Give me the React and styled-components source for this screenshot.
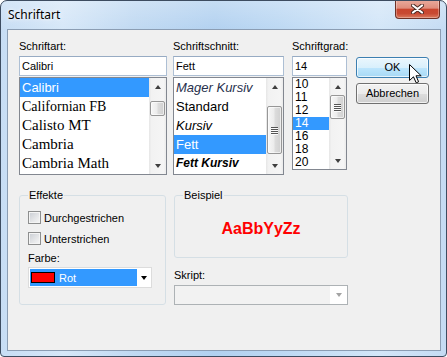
import React from 'react';
import styled, { createGlobalStyle } from 'styled-components';

const GlobalStyle = createGlobalStyle`
  html, body {
    margin: 0;
    padding: 0;
    background: #ffffff;
    overflow: hidden;
  }
  body {
    font-family: "Liberation Sans", Arial, sans-serif;
    font-size: 11px;
    color: #000;
  }
`;

const SANS = '"Liberation Sans", Arial, sans-serif';
const SERIF = '"Liberation Serif", "Times New Roman", serif';

const Window = styled.div`
  width: 447px;
  height: 357px;
  box-sizing: border-box;
  border: 1px solid #3d4c60;
  border-radius: 7px 7px 4px 4px;
  background:
    linear-gradient(to bottom, rgba(255,255,255,0.25), rgba(255,255,255,0) 30px),
    linear-gradient(to right, #c7ddf4 0%, #d6e7f8 14%, #c0d9f2 30%, #b2d1f0 48%, #bcd8f3 62%, #d3e6f8 85%, #c4dbf3 100%);
  display: flex;
  flex-direction: column;
  overflow: hidden;
`;

const TitleBar = styled.div`
  height: 28px;
  flex: none;
  display: flex;
  align-items: flex-start;
  justify-content: space-between;
`;

const Title = styled.div`
  font-family: "Noto Sans", "Open Sans", sans-serif;
  font-size: 12px;
  line-height: 16px;
  margin: 6px 0 0 7px;
  color: #000;
  text-shadow: 0 0 6px #fff, 0 0 3px #fff;
`;

const CloseButton = styled.div`
  width: 45px;
  height: 19px;
  margin: -1px 6px 0 0;
  box-sizing: border-box;
  border: 1px solid #6e3126;
  border-top: none;
  border-radius: 0 0 4px 4px;
  background: linear-gradient(to bottom, #e9ab9d 0%, #df8d7c 45%, #c9452e 52%, #c84a33 75%, #db7a5e 100%);
  box-shadow: inset 0 0 0 1px rgba(255, 255, 255, 0.3);
  display: flex;
  align-items: center;
  justify-content: center;
`;

const Client = styled.div`
  flex: 1;
  margin: 0 5px 5px 6px;
  border: 1px solid #8b9db3;
  background: #f0f0f0;
  padding: 10px 0 0 11px;
`;

const Row = styled.div`
  display: flex;
  align-items: flex-start;
  margin-top: ${p => p.$top || 0}px;
`;

const Column = styled.div`
  width: ${p => p.$w}px;
  margin-right: ${p => p.$gap || 0}px;
  flex: none;
  display: flex;
  flex-direction: column;
`;

const Label = styled.div`
  line-height: 13px;
  height: 13px;
  margin-top: ${p => p.$top || 0}px;
  margin-bottom: ${p => p.$bottom || 0}px;
  white-space: nowrap;
`;

const TextBox = styled.div`
  height: 20px;
  box-sizing: border-box;
  border: 1px solid #adbfd4;
  border-top-color: #97abc3;
  background: #fff;
  padding-left: 2px;
  line-height: 18px;
`;

const ListBox = styled.div`
  margin-top: 1px;
  height: ${p => p.$h}px;
  box-sizing: border-box;
  border: 1px solid #828790;
  background: #fff;
  display: flex;
`;

const Items = styled.div`
  flex: 1;
  overflow: hidden;
`;

const Item = styled.div`
  height: ${p => p.$h}px;
  line-height: ${p => p.$h}px;
  padding-left: 2px;
  white-space: nowrap;
  font-family: ${p => p.$family || SANS};
  font-size: ${p => p.$size}px;
  font-style: ${p => (p.$italic ? 'italic' : 'normal')};
  font-weight: ${p => (p.$bold ? 'bold' : 'normal')};
  color: ${p => (p.$selected ? '#fff' : p.$color || '#000')};
  background: ${p => (p.$selected ? '#3399ff' : 'transparent')};
`;

const ScrollBar = styled.div`
  width: 17px;
  flex: none;
  display: flex;
  flex-direction: column;
  background: linear-gradient(to right, #e6e6e6 0%, #f2f2f2 15%, #f5f5f5 85%, #ebebeb 100%);
`;

const ArrowBox = styled.div`
  height: 17px;
  flex: none;
  display: flex;
  align-items: center;
  justify-content: center;
`;

const Triangle = styled.div`
  width: 0;
  height: 0;
  border-left: 3.5px solid transparent;
  border-right: 3.5px solid transparent;
  ${p => (p.$up ? 'border-bottom' : 'border-top')}: 4px solid ${p => p.$color || '#3f3f3f'};
`;

const Track = styled.div`
  flex: 1;
  display: flex;
  flex-direction: column;
`;

const Thumb = styled.div`
  margin-top: ${p => p.$top}px;
  margin-left: 1px;
  width: 15px;
  height: ${p => p.$h}px;
  box-sizing: border-box;
  border: 1px solid #979797;
  border-radius: 2px;
  background: linear-gradient(to right, #f7f7f7 0%, #ececec 45%, #dcdcdc 55%, #d0d0d0 100%);
  box-shadow: inset 0 0 0 1px rgba(255, 255, 255, 0.6);
  display: flex;
  flex-direction: column;
  align-items: center;
  justify-content: center;
  gap: 1px;
`;

const GripLine = styled.div`
  width: 7px;
  height: 1px;
  background: #545454;
  box-shadow: 0 1px 0 #fafafa;
`;

const ButtonColumn = styled.div`
  width: 73px;
  flex: none;
  display: flex;
  flex-direction: column;
  padding-top: 17px;
  gap: 5px;
`;

const Button = styled.div`
  position: relative;
  height: 21px;
  box-sizing: border-box;
  border: 1px solid ${p => (p.$hot ? '#3c7fb1' : '#707070')};
  border-radius: 3px;
  background: ${p =>
    p.$hot
      ? 'linear-gradient(to bottom, #eaf6fd 0%, #d9f0fc 50%, #bee6fd 51%, #a7d9f5 100%)'
      : 'linear-gradient(to bottom, #f2f2f2 0%, #ebebeb 50%, #dddddd 51%, #cfcfcf 100%)'};
  box-shadow: inset 0 0 0 1px rgba(255, 255, 255, 0.7);
  display: flex;
  align-items: center;
  justify-content: center;
  line-height: 13px;
`;

const Cursor = styled.svg`
  position: absolute;
  left: 52px;
  top: 6px;
`;

const Group = styled.fieldset`
  margin: 0;
  padding: 0 8px;
  width: ${p => p.$w}px;
  height: ${p => p.$h}px;
  box-sizing: border-box;
  min-width: 0;
  border: 1px solid #d5dfe5;
  border-radius: 3px;
`;

const Legend = styled.legend`
  padding: 0 1px;
  line-height: 13px;
  font-size: 11px;
`;

const CheckRow = styled.div`
  display: flex;
  align-items: center;
  height: 13px;
  margin-top: ${p => p.$top}px;
`;

const CheckBox = styled.div`
  width: 13px;
  height: 13px;
  box-sizing: border-box;
  border: 1px solid #8e8f8f;
  background: linear-gradient(135deg, #c9cdd3 0%, #e6e7e9 60%, #f7f7f7 100%);
  box-shadow: inset 0 0 0 1px #f4f4f4;
  margin-right: 3px;
`;

const ColorCombo = styled.div`
  margin-top: 2px;
  width: 124px;
  height: 21px;
  box-sizing: border-box;
  border: 1px solid #dcdcdc;
  background: #fff;
  display: flex;
  padding: 1px;
`;

const ComboSelection = styled.div`
  flex: 1;
  background: #3399ff;
  color: #fff;
  display: flex;
  align-items: center;
  padding-left: 1px;
`;

const Swatch = styled.div`
  width: 24px;
  height: 11px;
  box-sizing: border-box;
  border: 1px solid #000;
  background: ${p => p.$color};
  margin-right: 4px;
`;

const ComboArrow = styled.div`
  width: 13px;
  display: flex;
  align-items: center;
  justify-content: center;
  padding-top: 1px;
`;

const RightColumn = styled.div`
  width: 174px;
  margin-left: 8px;
  display: flex;
  flex-direction: column;
`;

const Sample = styled.div`
  height: 54px;
  display: flex;
  align-items: center;
  justify-content: center;
  font-family: ${SANS};
  font-weight: bold;
  font-size: 16px;
  color: #ff0000;
`;

const DisabledCombo = styled.div`
  margin-top: 3px;
  height: 20px;
  box-sizing: border-box;
  border: 1px solid #adb2b5;
  background: #f2f2f2;
  display: flex;
  justify-content: flex-end;
`;

const DisabledArrow = styled.div`
  width: 17px;
  background: #fff;
  display: flex;
  align-items: center;
  justify-content: center;
`;

const fonts = [
  { text: 'Calibri', family: SANS, size: 13 },
  { text: 'Californian FB', family: SERIF, size: 14 },
  { text: 'Calisto MT', family: SERIF, size: 15 },
  { text: 'Cambria', family: SERIF, size: 15 },
  { text: 'Cambria Math', family: SERIF, size: 15 },
];

const styles = [
  { text: 'Mager Kursiv', italic: true, color: '#27314d', size: 13 },
  { text: 'Standard', size: 13 },
  { text: 'Kursiv', italic: true, size: 13 },
  { text: 'Fett', size: 13 },
  { text: 'Fett Kursiv', bold: true, italic: true, size: 12 },
];

const sizes = ['10', '11', '12', '14', '16', '18', '20'];

function Scroller({ thumbTop, thumbHeight, grip }) {
  return (
    <ScrollBar>
      <ArrowBox><Triangle $up /></ArrowBox>
      <Track>
        <Thumb $top={thumbTop} $h={thumbHeight}>
          {grip && [0, 1, 2, 3].map(i => <GripLine key={i} />)}
        </Thumb>
      </Track>
      <ArrowBox><Triangle /></ArrowBox>
    </ScrollBar>
  );
}

export default function App() {
  return (
    <>
      <GlobalStyle />
      <Window>
        <TitleBar>
          <Title>Schriftart</Title>
          <CloseButton>
            <svg width="13" height="10" viewBox="0 0 13 10">
              <path d="M2 1.5 L11 8.5 M11 1.5 L2 8.5" stroke="#4b2a24" strokeWidth="4" strokeLinecap="round" />
              <path d="M2 1.5 L11 8.5 M11 1.5 L2 8.5" stroke="#ffffff" strokeWidth="2.2" strokeLinecap="round" />
            </svg>
          </CloseButton>
        </TitleBar>
        <Client>
          <Row>
            <Column $w={148} $gap={6}>
              <Label $bottom={3}>Schriftart:</Label>
              <TextBox>Calibri</TextBox>
              <ListBox $h={98}>
                <Items>
                  {fonts.map((f, i) => (
                    <Item key={f.text} $h={19} $family={f.family} $size={f.size} $selected={i === 0}>
                      {f.text}
                    </Item>
                  ))}
                </Items>
                <Scroller thumbTop={6} thumbHeight={15} />
              </ListBox>
            </Column>
            <Column $w={111} $gap={8}>
              <Label $bottom={3}>Schriftschnitt:</Label>
              <TextBox>Fett</TextBox>
              <ListBox $h={98}>
                <Items>
                  {styles.map((s, i) => (
                    <Item
                      key={s.text}
                      $h={19}
                      $size={s.size}
                      $italic={s.italic}
                      $bold={s.bold}
                      $color={s.color}
                      $selected={i === 3}
                    >
                      {s.text}
                    </Item>
                  ))}
                </Items>
                <Scroller thumbTop={11} thumbHeight={48} grip />
              </ListBox>
            </Column>
            <Column $w={55} $gap={9}>
              <Label $bottom={3}>Schriftgrad:</Label>
              <TextBox>14</TextBox>
              <ListBox $h={93}>
                <Items>
                  {sizes.map(s => (
                    <Item key={s} $h={13} $size={12} $selected={s === '14'}>
                      {s}
                    </Item>
                  ))}
                </Items>
                <Scroller thumbTop={0} thumbHeight={24} grip />
              </ListBox>
            </Column>
            <ButtonColumn>
              <Button $hot>
                OK
                <Cursor width="13" height="20" viewBox="0 0 13 20">
                  <path
                    d="M0.5 0.5 L0.5 16.5 L4.5 12.8 L7.2 18.8 L9.6 17.8 L7 11.8 L12.2 11.8 Z"
                    fill="#fff"
                    stroke="#000"
                    strokeWidth="1"
                    strokeLinejoin="miter"
                  />
                </Cursor>
              </Button>
              <Button>Abbrechen</Button>
            </ButtonColumn>
          </Row>
          <Row $top={14}>
            <Group $w={147} $h={116}>
              <Legend>Effekte</Legend>
              <CheckRow $top={9}>
                <CheckBox />
                Durchgestrichen
              </CheckRow>
              <CheckRow $top={8}>
                <CheckBox />
                Unterstrichen
              </CheckRow>
              <Label $top={7}>Farbe:</Label>
              <ColorCombo>
                <ComboSelection>
                  <Swatch $color="#ff0000" />
                  Rot
                </ComboSelection>
                <ComboArrow><Triangle $color="#000" /></ComboArrow>
              </ColorCombo>
            </Group>
            <RightColumn>
              <Group $w={174} $h={69}>
                <Legend>Beispiel</Legend>
                <Sample>AaBbYyZz</Sample>
              </Group>
              <Label $top={11}>Skript:</Label>
              <DisabledCombo>
                <DisabledArrow><Triangle $color="#a3a3a3" /></DisabledArrow>
              </DisabledCombo>
            </RightColumn>
          </Row>
        </Client>
      </Window>
    </>
  );
}
